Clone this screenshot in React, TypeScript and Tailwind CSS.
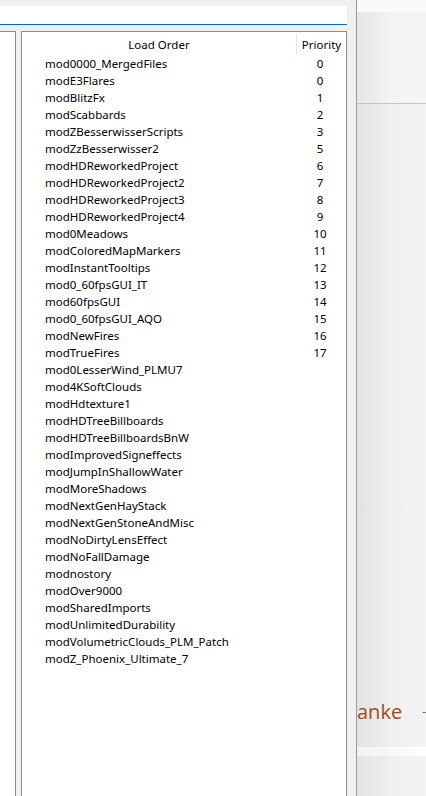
const mods: [string, number | null][] = [
  ['mod0000_MergedFiles', 0],
  ['modE3Flares', 0],
  ['modBlitzFx', 1],
  ['modScabbards', 2],
  ['modZBesserwisserScripts', 3],
  ['modZzBesserwisser2', 5],
  ['modHDReworkedProject', 6],
  ['modHDReworkedProject2', 7],
  ['modHDReworkedProject3', 8],
  ['modHDReworkedProject4', 9],
  ['mod0Meadows', 10],
  ['modColoredMapMarkers', 11],
  ['modInstantTooltips', 12],
  ['mod0_60fpsGUI_IT', 13],
  ['mod60fpsGUI', 14],
  ['mod0_60fpsGUI_AQO', 15],
  ['modNewFires', 16],
  ['modTrueFires', 17],
  ['mod0LesserWind_PLMU7', null],
  ['mod4KSoftClouds', null],
  ['modHdtexture1', null],
  ['modHDTreeBillboards', null],
  ['modHDTreeBillboardsBnW', null],
  ['modImprovedSigneffects', null],
  ['modJumpInShallowWater', null],
  ['modMoreShadows', null],
  ['modNextGenHayStack', null],
  ['modNextGenStoneAndMisc', null],
  ['modNoDirtyLensEffect', null],
  ['modNoFallDamage', null],
  ['modnostory', null],
  ['modOver9000', null],
  ['modSharedImports', null],
  ['modUnlimitedDurability', null],
  ['modVolumetricClouds_PLM_Patch', null],
  ['modZ_Phoenix_Ultimate_7', null],
]

export default function App() {
  return (
    <div className="flex h-[796px] w-[426px] overflow-hidden bg-[#f0f0f0] font-['Noto_Sans',sans-serif] text-[11.5px] text-[#000]">
      {/* dialog area */}
      <div className="flex w-[356px] shrink-0 flex-col pt-[6px]">
        <div className="h-[19px] w-[347px] border-b border-[#0067c0] bg-white" />
        <div className="mt-[6px] flex flex-1 gap-[5px]">
          <div className="w-[16px] border-t border-r border-[#8a8d93] bg-white" />
          <div className="flex w-[326px] flex-col border-t border-x border-[#8a8d93] bg-white">
            <div className="flex h-[23px] items-center pt-[2px]">
              <div className="flex-1 text-center leading-none">Load Order</div>
              <div className="flex h-full w-[50px] items-center justify-center border-l border-[#e5e5e5] leading-none">
                Priority
              </div>
            </div>
            {mods.map(([name, prio]) => (
              <div key={name} className="flex h-[17px] items-center leading-none">
                <div className="flex-1 pl-[23px]">{name}</div>
                <div className="w-[50px] pr-[2px] text-center">{prio ?? ''}</div>
              </div>
            ))}
          </div>
        </div>
      </div>

      {/* background window behind */}
      <div className="flex w-[70px] shrink-0 flex-col border-l border-[#9a9a9a] bg-gradient-to-r from-[#e2e2e2] via-[#f0f0f0] to-[#f4f4f4]">
        <div className="h-[12px] bg-[#fafafa]" />
        <div className="h-[92px] border-b border-[#c4c4c4] bg-gradient-to-r from-[#e6e6e6] via-[#f3f3f3] to-[#f5f5f5]" />
        <div className="flex h-[622px] items-end">
          <div className="flex w-full items-center justify-between pb-[4px] font-['Open_Sans',sans-serif] text-[20px] leading-none text-[#a04a1c]">
            <span>anke</span>
            <span className="text-[12px] text-[#7a5a40]">-</span>
          </div>
        </div>
        <div className="mt-[21px] h-[9px] bg-gradient-to-r from-[#f2f2f2] to-white" />
      </div>
    </div>
  )
}
